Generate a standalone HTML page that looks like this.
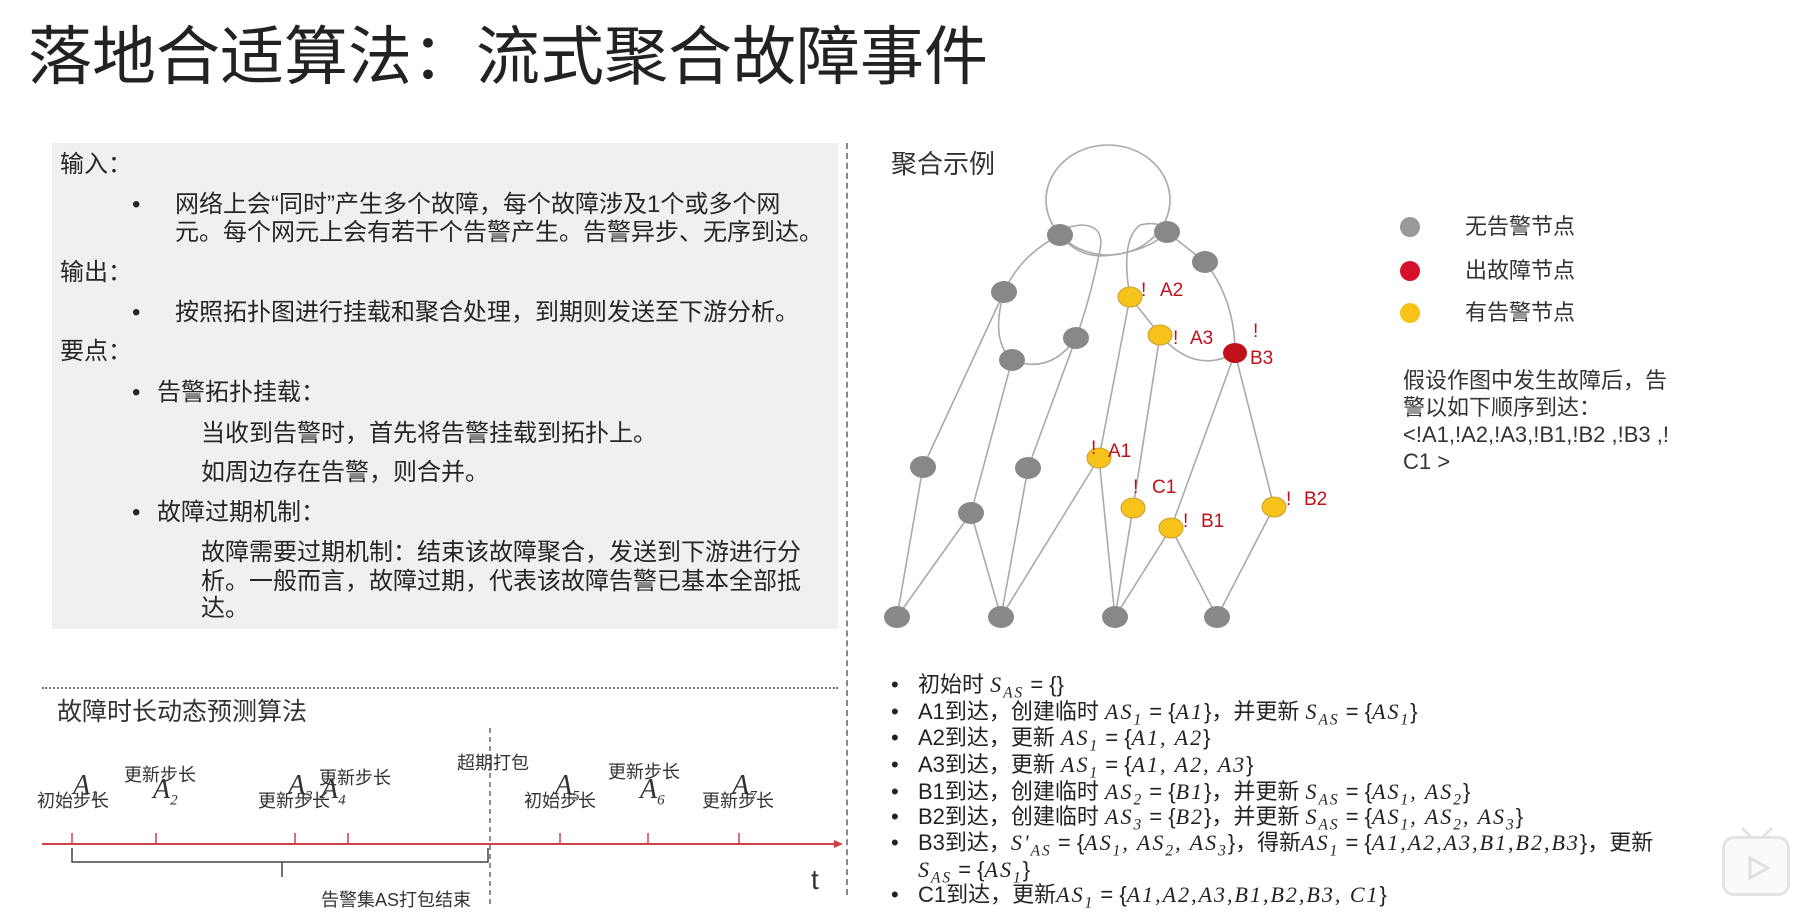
<!DOCTYPE html>
<html><head><meta charset="utf-8"><style>
body{margin:0;width:1799px;height:922px;background:#fff;position:relative;overflow:hidden;font-family:"Liberation Sans","Noto Sans CJK SC",sans-serif;color:#222}
.a{position:absolute;white-space:nowrap;line-height:1}
.p{font-size:24px;color:#262626}
.m{font-family:"Liberation Serif","Noto Serif CJK SC",serif;font-style:italic;letter-spacing:2px}
sub{line-height:0;font-size:70%}
.r{font-size:22px;color:#222}
.tl{font-size:18px;color:#333}
.A{font-family:"Liberation Serif",serif;font-style:italic;font-size:28px;color:#333}
</style></head><body>
<div class="a" style="left:28px;top:25px;font-size:64px;color:#222">落地合适算法：流式聚合故障事件</div>
<div class="a" style="left:52px;top:143px;width:786px;height:486px;background:#f0f0f0"></div>
<div class="a" style="left:846px;top:143px;height:752px;border-left:2px dashed #888"></div>

<div class="a p" style="left:60px;top:153px">输入：</div>
<div class="a p" style="left:132px;top:193px">•</div>
<div class="a p" style="left:175px;top:193px">网络上会“同时”产生多个故障，每个故障涉及1个或多个网</div>
<div class="a p" style="left:175px;top:221px">元。每个网元上会有若干个告警产生。告警异步、无序到达。</div>
<div class="a p" style="left:60px;top:261px">输出：</div>
<div class="a p" style="left:132px;top:301px">•</div>
<div class="a p" style="left:175px;top:301px">按照拓扑图进行挂载和聚合处理，到期则发送至下游分析。</div>
<div class="a p" style="left:60px;top:340px">要点：</div>
<div class="a p" style="left:132px;top:381px">•</div>
<div class="a p" style="left:157px;top:381px">告警拓扑挂载：</div>
<div class="a p" style="left:201px;top:422px">当收到告警时，首先将告警挂载到拓扑上。</div>
<div class="a p" style="left:201px;top:461px">如周边存在告警，则合并。</div>
<div class="a p" style="left:132px;top:501px">•</div>
<div class="a p" style="left:157px;top:501px">故障过期机制：</div>
<div class="a p" style="left:201px;top:541px">故障需要过期机制：结束该故障聚合，发送到下游进行分</div>
<div class="a p" style="left:201px;top:570px">析。一般而言，故障过期，代表该故障告警已基本全部抵</div>
<div class="a p" style="left:201px;top:597px">达。</div>

<div class="a" style="left:42px;top:687px;width:796px;border-top:2px dotted #777"></div>
<div class="a" style="left:57px;top:700px;font-size:25px;color:#333">故障时长动态预测算法</div>

<svg class="a" style="left:0;top:700px" width="846" height="222">
<line x1="490" y1="28" x2="490" y2="207" stroke="#555" stroke-dasharray="5,4" stroke-width="1.3"/>
<line x1="42" y1="144" x2="838" y2="144" stroke="#d0404a" stroke-width="2"/>
<polygon points="843,144 834,140 834,148" fill="#d0404a"/>
<g stroke="#d0404a" stroke-width="1.5"><line x1="72" y1="133" x2="72" y2="144"/><line x1="156" y1="133" x2="156" y2="144"/><line x1="295" y1="133" x2="295" y2="144"/><line x1="348" y1="133" x2="348" y2="144"/><line x1="560" y1="133" x2="560" y2="144"/><line x1="648" y1="133" x2="648" y2="144"/><line x1="739" y1="133" x2="739" y2="144"/></g>
<path d="M72 148 V162 H488 V148 M282 162 V177" fill="none" stroke="#444" stroke-width="1.5"/>
</svg>
<div class="a tl" style="left:37px;top:792px">初始步长</div><div class="a A" style="left:73px;top:772px">A<sub style="font-size:15px">1</sub></div>
<div class="a tl" style="left:124px;top:766px">更新步长</div><div class="a A" style="left:153px;top:776px">A<sub style="font-size:15px">2</sub></div>
<div class="a tl" style="left:258px;top:792px">更新步长</div><div class="a A" style="left:288px;top:772px">A<sub style="font-size:15px">3</sub></div>
<div class="a tl" style="left:319px;top:769px">更新步长</div><div class="a A" style="left:321px;top:776px">A<sub style="font-size:15px">4</sub></div>
<div class="a tl" style="left:457px;top:754px">超期打包</div>
<div class="a tl" style="left:524px;top:792px">初始步长</div><div class="a A" style="left:555px;top:772px">A<sub style="font-size:15px">5</sub></div>
<div class="a tl" style="left:608px;top:763px">更新步长</div><div class="a A" style="left:640px;top:776px">A<sub style="font-size:15px">6</sub></div>
<div class="a tl" style="left:702px;top:792px">更新步长</div><div class="a A" style="left:732px;top:772px">A<sub style="font-size:15px">7</sub></div>
<div class="a" style="left:811px;top:866px;font-size:28px;color:#333">t</div>
<div class="a tl" style="left:321px;top:891px">告警集AS打包结束</div>

<div class="a" style="left:891px;top:151px;font-size:26px;color:#333">聚合示例</div>
<svg class="a" style="left:860px;top:130px" width="560" height="510">
<g fill="none" stroke="#aaa" stroke-width="1.6" transform="translate(-860,-130)">
<ellipse cx="1108" cy="200" rx="62" ry="55"/>
<path d="M1060 235 Q1080 260 1112 255 Q1150 250 1167 232"/>
<path d="M1060 235 Q1020 255 1004 292"/>
<path d="M1004 292 L923 467"/>
<path d="M1004 292 Q990 340 1012 360 Q1050 375 1076 338"/>
<path d="M1076 338 Q1090 300 1100 250 Q1105 225 1080 225 Q1050 230 1060 235"/>
<path d="M1076 338 L1028 468"/>
<path d="M1012 360 L971 513"/>
<path d="M1130 297 Q1120 240 1140 225 Q1160 220 1167 232"/>
<path d="M1130 297 L1099 458"/>
<path d="M1130 297 L1160 335"/>
<path d="M1160 335 L1133 508"/>
<path d="M1160 335 Q1195 375 1235 353"/>
<path d="M1167 232 L1205 262 Q1235 300 1235 353"/>
<path d="M1235 353 L1274 507"/>
<path d="M1235 353 L1171 528"/>
<path d="M897 617 L923 467 M897 617 L971 513 M1001 617 L971 513 M1001 617 L1028 468 M1001 617 L1099 458 M1115 617 L1099 458 M1115 617 L1133 508 M1115 617 L1171 528 M1217 617 L1171 528 M1217 617 L1274 507"/>
</g>
<g transform="translate(-860,-130)">
<g fill="#888"><ellipse cx="1060" cy="235" rx="13" ry="11"/><ellipse cx="1167" cy="232" rx="13" ry="11"/><ellipse cx="1205" cy="262" rx="13" ry="11"/><ellipse cx="1004" cy="292" rx="13" ry="11"/><ellipse cx="1076" cy="338" rx="13" ry="11"/><ellipse cx="1012" cy="360" rx="13" ry="11"/><ellipse cx="923" cy="467" rx="13" ry="11"/><ellipse cx="1028" cy="468" rx="13" ry="11"/><ellipse cx="971" cy="513" rx="13" ry="11"/><ellipse cx="897" cy="617" rx="13" ry="11"/><ellipse cx="1001" cy="617" rx="13" ry="11"/><ellipse cx="1115" cy="617" rx="13" ry="11"/><ellipse cx="1217" cy="617" rx="13" ry="11"/></g>
<g fill="#f7c21a" stroke="#c9a030"><ellipse cx="1130" cy="297" rx="12" ry="10"/><ellipse cx="1160" cy="335" rx="12" ry="10"/><ellipse cx="1099" cy="458" rx="12" ry="10"/><ellipse cx="1133" cy="508" rx="12" ry="10"/><ellipse cx="1171" cy="528" rx="12" ry="10"/><ellipse cx="1274" cy="507" rx="12" ry="10"/></g>
<ellipse cx="1235" cy="353" rx="12" ry="10" fill="#c0101a"/>
<g fill="#c0101a" font-family="Liberation Sans" font-size="19"><text x="1141" y="296">!</text><text x="1160" y="296">A2</text><text x="1173" y="344">!</text><text x="1190" y="344">A3</text><text x="1253" y="337">!</text><text x="1250" y="364">B3</text><text x="1091" y="454">!</text><text x="1108" y="457">A1</text><text x="1133" y="493">!</text><text x="1152" y="493">C1</text><text x="1183" y="527">!</text><text x="1201" y="527">B1</text><text x="1286" y="505">!</text><text x="1304" y="505">B2</text></g>
</g>
</svg>
<svg class="a" style="left:1398px;top:215px" width="26" height="110"><circle cx="12" cy="12" r="10" fill="#999"/><circle cx="12" cy="56" r="10" fill="#d4102a"/><circle cx="12" cy="98" r="10" fill="#f7c21a"/></svg>
<div class="a" style="left:1465px;top:216px;font-size:22px;color:#333">无告警节点</div>
<div class="a" style="left:1465px;top:260px;font-size:22px;color:#333">出故障节点</div>
<div class="a" style="left:1465px;top:302px;font-size:22px;color:#333">有告警节点</div>
<div class="a" style="left:1403px;top:367px;font-size:22px;color:#333;line-height:27px">假设作图中发生故障后，告<br>警以如下顺序到达：<br>&lt;!A1,!A2,!A3,!B1,!B2 ,!B3 ,!<br>C1 &gt;</div>

<div class="a r" style="left:891px;top:674px">•</div><div class="a r" style="left:918px;top:674px">初始时 <span class="m">S<sub>AS</sub></span> = {}</div>
<div class="a r" style="left:891px;top:701px">•</div><div class="a r" style="left:918px;top:701px">A1到达，创建临时 <span class="m">AS<sub>1</sub></span> = {<span class="m">A1</span>}，并更新 <span class="m">S<sub>AS</sub></span> = {<span class="m">AS<sub>1</sub></span>}</div>
<div class="a r" style="left:891px;top:727px">•</div><div class="a r" style="left:918px;top:727px">A2到达，更新 <span class="m">AS<sub>1</sub></span> = {<span class="m">A1, A2</span>}</div>
<div class="a r" style="left:891px;top:754px">•</div><div class="a r" style="left:918px;top:754px">A3到达，更新 <span class="m">AS<sub>1</sub></span> = {<span class="m">A1, A2, A3</span>}</div>
<div class="a r" style="left:891px;top:781px">•</div><div class="a r" style="left:918px;top:781px">B1到达，创建临时 <span class="m">AS<sub>2</sub></span> = {<span class="m">B1</span>}，并更新 <span class="m">S<sub>AS</sub></span> = {<span class="m">AS<sub>1</sub>, AS<sub>2</sub></span>}</div>
<div class="a r" style="left:891px;top:806px">•</div><div class="a r" style="left:918px;top:806px">B2到达，创建临时 <span class="m">AS<sub>3</sub></span> = {<span class="m">B2</span>}，并更新 <span class="m">S<sub>AS</sub></span> = {<span class="m">AS<sub>1</sub>, AS<sub>2</sub>, AS<sub>3</sub></span>}</div>
<div class="a r" style="left:891px;top:832px">•</div><div class="a r" style="left:918px;top:832px">B3到达，<span class="m">S'<sub>AS</sub></span> = {<span class="m">AS<sub>1</sub>, AS<sub>2</sub>, AS<sub>3</sub></span>}，得新<span class="m">AS<sub>1</sub></span> = {<span class="m">A1,A2,A3,B1,B2,B3</span>}，更新</div>
<div class="a r" style="left:918px;top:859px"><span class="m">S<sub>AS</sub></span> = {<span class="m">AS<sub>1</sub></span>}</div>
<div class="a r" style="left:891px;top:884px">•</div><div class="a r" style="left:918px;top:884px">C1到达，更新<span class="m">AS<sub>1</sub></span> = {<span class="m">A1,A2,A3,B1,B2,B3, C1</span>}</div>

<div class="a" style="left:1722px;top:836px;width:62px;height:54px;border:3px solid #e4e4e4;border-radius:12px;background:#fafafa"></div>
<svg class="a" style="left:1722px;top:818px" width="70" height="80"><path d="M20 10 L30 20 M50 10 L40 20" stroke="#e4e4e4" stroke-width="3"/><path d="M28 40 L28 60 L46 50 Z" fill="none" stroke="#e0e0e0" stroke-width="3"/></svg>
</body></html>
